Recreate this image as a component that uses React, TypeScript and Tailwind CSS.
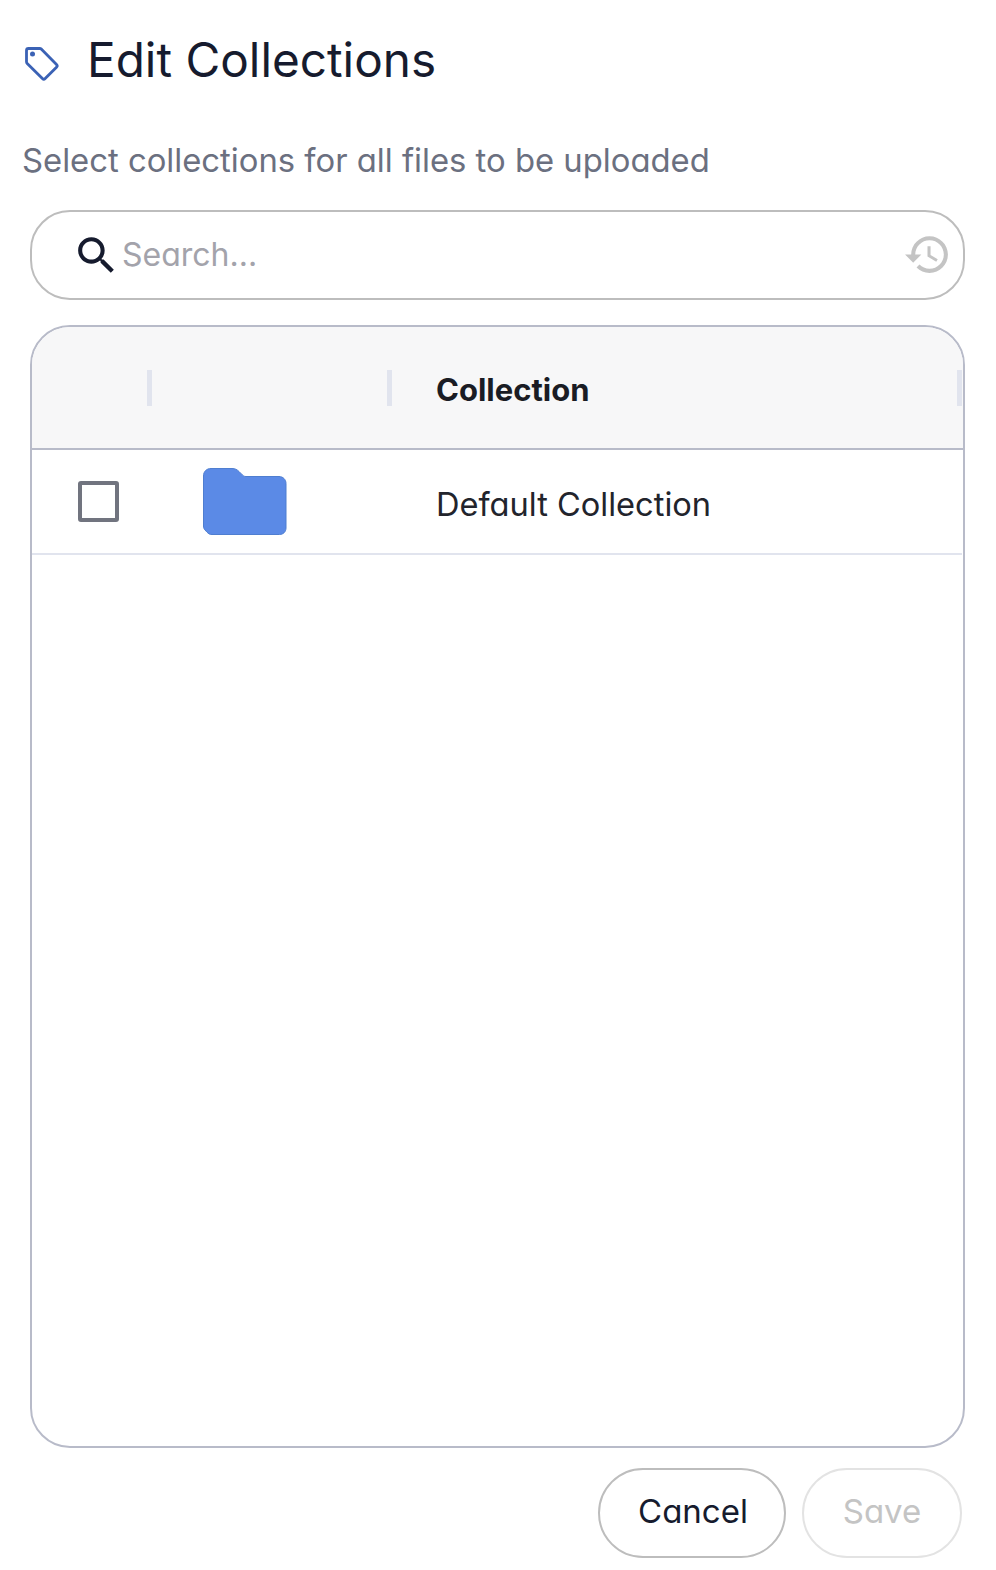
const font = "font-['Inter',sans-serif] [font-feature-settings:'cv11']";

const TagIcon = () => (
    <svg width="36" height="36" viewBox="0 0 36 36" fill="none">
        <path
            d="M4.500 2.500h11.200c.7 0 1.300.3 1.800.7l15 15.200c.8.800.8 2 0 2.800L21.200 32.500c-.8.800-2 .8-2.800 0L3.200 17.400c-.5-.5-.7-1.100-.7-1.700V4.500c0-1.200.8-2 2-2z"
            stroke="#3b62b5"
            strokeWidth="2.800"
            strokeLinejoin="round"
        />
        <circle cx="8.500" cy="8" r="2.500" fill="#3b62b5" />
    </svg>
);

const SearchIcon = () => (
    <svg width="49" height="49" viewBox="0 0 24 24" fill="#161b2e">
        <path d="M15.500 14h-.79l-.28-.27C15.410 12.590 16 11.110 16 9.500 16 5.910 13.090 3 9.500 3S3 5.910 3 9.500 5.910 16 9.500 16c1.610 0 3.090-.59 4.230-1.570l.27.28v.79l5 4.990L20.490 19l-4.990-5zm-6 0C7.010 14 5 11.990 5 9.500S7.010 5 9.500 5 14 7.010 14 9.500 11.990 14 9.500 14z" />
    </svg>
);

const HistoryIcon = () => (
    <svg width="49" height="49" viewBox="0 0 24 24" fill="#c4c4c4" className="mb-[2px]">
        <path d="M13 3c-4.970 0-9 4.030-9 9H1l3.890 3.890.07.14L9 12H6c0-3.870 3.130-7 7-7s7 3.130 7 7-3.130 7-7 7c-1.930 0-3.680-.79-4.940-2.060l-1.420 1.420C8.270 19.990 10.510 21 13 21c4.970 0 9-4.030 9-9s-4.030-9-9-9zm-1 5v5l4.280 2.540.72-1.210-3.500-2.080V8H12z" />
    </svg>
);

const FolderIcon = () => (
    <svg width="84" height="67" viewBox="0 0 84 67" className="block blur-[0.6px]">
        <path
            d="M8 0.500h21c3 0 5 1 7 3l3.500 3.500c1 1 2 1.500 3.500 1.500h33c4 0 7 3 7 7V60c0 4-3 6.500-6.500 6.500H9c-2.500 0-3.500-.8-5-2.300L2 62c-1-1-1.500-2.500-1.500-4V8c0-4.500 3-7.500 7.500-7.500z"
            fill="#5b8ae6"
            stroke="#4f7ed0"
            strokeWidth="1"
        />
    </svg>
);

const Divider = () => <div className="h-[36px] w-[5px] bg-[#e1e4ee]" />;

export default function App() {
    return (
        <div className={`flex h-[1570px] w-[996px] flex-col bg-white ${font}`}>
            <div className="flex h-[120px] items-center pl-[24px] pt-[8px]">
                <TagIcon />
                <h1 className="mb-[7px] ml-[27px] text-[47.700px] leading-none text-[#161b2e]">Edit Collections</h1>
            </div>
            <p className="pl-[22px] pt-[20px] text-[32.800px] leading-[40px] text-[#6b7080]">
                Select collections for all files to be uploaded
            </p>
            <div className="ml-[30px] mt-[30px] flex h-[90px] w-[935px] items-center rounded-[40px] border-2 border-[#bdbdbd] pl-[40px] pr-[11px]">
                <SearchIcon />
                <span className="ml-[1px] flex-1 text-[32px] text-[#a3a3ab]">Search...</span>
                <HistoryIcon />
            </div>
            <div className="ml-[30px] mt-[25px] flex h-[1123px] w-[935px] flex-col overflow-hidden rounded-[40px] border-2 border-[#b8bbc9]">
                <div className="flex h-[123px] shrink-0 border-b-2 border-[#b8bbc9] bg-[#f7f7f8]">
                    <div className="flex w-[120px] items-center justify-end">
                        <Divider />
                    </div>
                    <div className="flex w-[240px] items-center justify-end">
                        <Divider />
                    </div>
                    <div className="flex flex-1 items-center justify-between pl-[44px] pr-[1px]">
                        <span className="pt-[5px] text-[31px] font-bold text-[#1a1c24]">Collection</span>
                        <Divider />
                    </div>
                </div>
                <div className="mr-[1px] flex h-[105px] shrink-0 items-center border-b-2 border-[#e1e4ee]">
                    <div className="w-[120px] pl-[46px]">
                        <div className="h-[41px] w-[41px] rounded-[3px] border-4 border-[#71747f]" />
                    </div>
                    <div className="w-[240px] pl-[51px]">
                        <FolderIcon />
                    </div>
                    <span className="pl-[44px] pt-[5px] text-[32.600px] text-[#22242c]">Default Collection</span>
                </div>
            </div>
            <div className="mt-[20px] flex justify-end gap-[16px] pr-[34px]">
                <button className="h-[90px] w-[188px] rounded-[45px] border-2 border-[#bdbdbd] pb-[2px] pl-[2px] text-[33px] text-[#161b2e]">
                    Cancel
                </button>
                <button className="h-[90px] w-[160px] rounded-[45px] border-2 border-[#e3e3e3] pb-[2px] text-[33px] text-[#c4c4c4]">
                    Save
                </button>
            </div>
        </div>
    );
}
